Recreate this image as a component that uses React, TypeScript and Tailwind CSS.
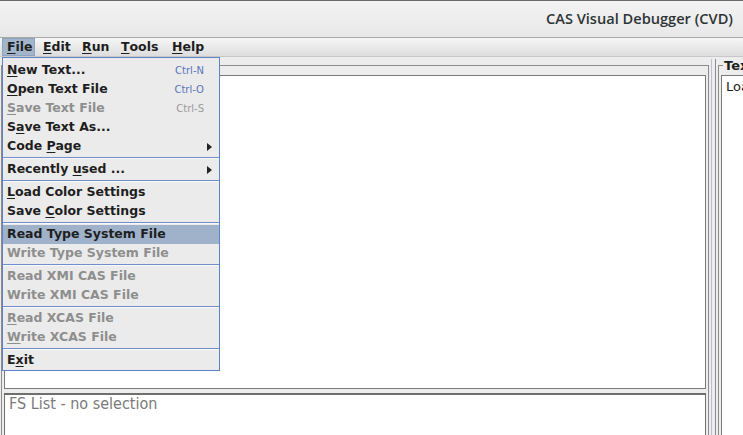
import React from "react";

const U = ({ children }: { children: React.ReactNode }) => (
  <span className="underline decoration-1 underline-offset-[2px]">{children}</span>
);

type ItemProps = {
  children: React.ReactNode;
  shortcut?: string;
  disabled?: boolean;
  arrow?: boolean;
  active?: boolean;
};

const Item = ({ children, shortcut, disabled, arrow, active }: ItemProps) => (
  <div
    className={`h-[19px] flex items-center justify-between pl-[4px] ${
      active ? "bg-[#9fb2c9]" : ""
    } ${disabled ? "text-[#8e8e8e]" : "text-[#1e1e1e]"}`}
  >
    <span className="font-bold text-[12.5px] leading-none whitespace-nowrap">{children}</span>
    {shortcut && (
      <span
        className={`text-[10px] leading-none mr-[15px] ${
          disabled ? "text-[#9a9a9a]" : "text-[#5775bb]"
        }`}
      >
        {shortcut}
      </span>
    )}
    {arrow && (
      <svg width="5" height="8" viewBox="0 0 5 8" className="mr-[7px]">
        <polygon points="0,0 5,4 0,8" fill="#222" />
      </svg>
    )}
  </div>
);

const Sep = () => (
  <div className="h-[4px] pt-[1px]">
    <div className="h-[1px] bg-[#6e8fcc]" />
    <div className="h-[1px] bg-[#f8f8f8]" />
  </div>
);

export default function App() {
  return (
    <div
      className="relative w-[743px] h-[435px] overflow-hidden bg-[#ededed] text-[#1e1e1e]"
      style={{ fontFamily: "'DejaVu Sans', sans-serif" }}
    >
      {/* Title bar */}
      <div className="h-[38px] border-t border-[#6a6a6a] border-b border-b-[#a9a9a9] bg-gradient-to-b from-[#f3f3f3] to-[#e8e8e8] flex items-center justify-end pr-[10px]">
        <span
          className="text-[14.6px] font-semibold text-[#2e3436] leading-none -mt-[1px]"
          style={{ fontFamily: "'Open Sans', 'DejaVu Sans', sans-serif" }}
        >
          CAS Visual Debugger (CVD)
        </span>
      </div>

      {/* Menu bar */}
      <div className="h-[19px] flex items-stretch pl-[2px] bg-gradient-to-b from-[#f6f6f6] to-[#dddddd] border-b border-[#c8c8c8] text-[12.5px] font-bold leading-none">
        <div className="w-[33px] flex items-center pl-[4px] pt-[1px] bg-[#a2b5cb] border border-[#8ea3bd]">
          <U>F</U>ile
        </div>
        <div className="w-[41px] flex items-center pl-[8px] pt-[1px]">
          <U>E</U>dit
        </div>
        <div className="w-[39px] flex items-center pl-[6px] pt-[1px]">
          <U>R</U>un
        </div>
        <div className="w-[51px] flex items-center pl-[6px] pt-[1px]">
          <U>T</U>ools
        </div>
        <div className="flex items-center pl-[6px] pt-[1px]">
          <U>H</U>elp
        </div>
      </div>

      {/* Body */}
      <div className="flex h-[378px]">
        <div className="w-[709px] shrink-0 pt-[8px] pl-[1px] flex flex-col">
          <div className="flex-1 flex flex-col border-l border-t border-r border-[#8c8c8c] pl-[2px] pr-[2px] pt-[9px]">
            <div className="h-[314px] bg-white border border-[#7a7a7a]" />
            <div className="h-[4px]" />
            <div
              className="flex-1 bg-white border-t-2 border-x border-[#6f6f6f] pl-[4px] pt-[1px] text-[16px] leading-none text-[#7a7a7a]"
              style={{ fontFamily: "'DejaVu Sans Condensed', 'DejaVu Sans', sans-serif" }}
            >
              FS List - no selection
            </div>
          </div>
        </div>
        <div className="w-[9px] shrink-0 flex pl-[2px] gap-[3px] pt-[2px]">
          <div className="w-[1px] bg-[#b6c2cf]" />
          <div className="w-[1px] bg-[#8c8c8c]" />
        </div>
        <div className="flex-1 min-w-0 overflow-hidden pt-[8px] flex flex-col relative">
          <div className="flex-1 flex flex-col border-l border-t border-[#8c8c8c] pl-[2px] pt-[9px]">
            <div className="flex-1 bg-white border-l border-t border-[#7a7a7a] pl-[4px] pt-[4px] whitespace-nowrap text-[13px] leading-none text-[#222]">
              Loaded
            </div>
          </div>
          <span className="absolute left-[5px] top-[2px] bg-[#ededed] px-[1px] text-[13px] font-bold leading-none whitespace-nowrap">
            Text
          </span>
        </div>
      </div>

      {/* File menu popup */}
      <div className="absolute left-[2px] top-[57px] w-[218px] bg-[#ebebeb] border border-[#5f83c8] pt-[3px]">
        <Item shortcut="Ctrl-N">
          <U>N</U>ew Text...
        </Item>
        <Item shortcut="Ctrl-O">
          <U>O</U>pen Text File
        </Item>
        <Item shortcut="Ctrl-S" disabled>
          <U>S</U>ave Text File
        </Item>
        <Item>
          S<U>a</U>ve Text As...
        </Item>
        <Item arrow>
          Code <U>P</U>age
        </Item>
        <Sep />
        <Item arrow>
          Recently <U>u</U>sed ...
        </Item>
        <Sep />
        <Item>
          <U>L</U>oad Color Settings
        </Item>
        <Item>
          Save <U>C</U>olor Settings
        </Item>
        <Sep />
        <Item active>Read Type System File</Item>
        <Item disabled>Write Type System File</Item>
        <Sep />
        <Item disabled>Read XMI CAS File</Item>
        <Item disabled>Write XMI CAS File</Item>
        <Sep />
        <Item disabled>
          <U>R</U>ead XCAS File
        </Item>
        <Item disabled>
          <U>W</U>rite XCAS File
        </Item>
        <Sep />
        <Item>
          E<U>x</U>it
        </Item>
      </div>
    </div>
  );
}
